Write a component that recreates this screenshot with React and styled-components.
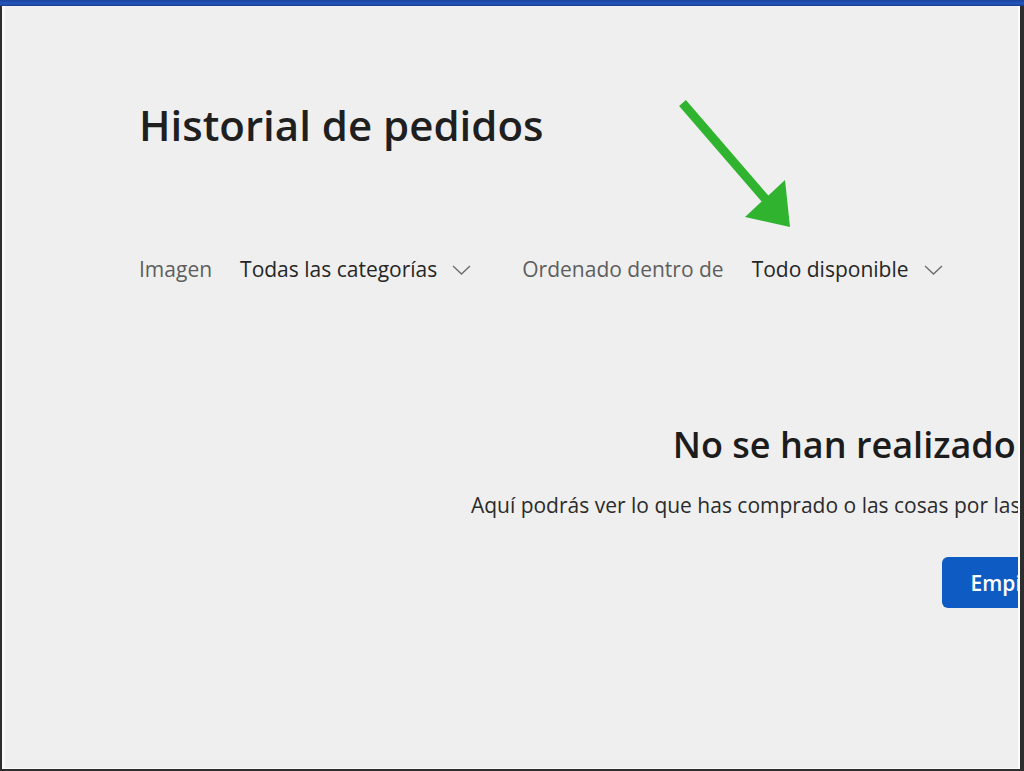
import React from "react";
import styled, { createGlobalStyle } from "styled-components";

const GlobalStyle = createGlobalStyle`
  html, body {
    margin: 0;
    padding: 0;
    background: #2d2d2d;
  }
  body {
    font-family: "Open Sans", "Noto Sans", "Liberation Sans", sans-serif;
  }
`;

const Screen = styled.div`
  position: relative;
  width: 1024px;
  height: 771px;
  display: flex;
  flex-direction: column;
  overflow: hidden;
  background: #2d2d2d;
`;

const TopBar = styled.div`
  height: 6px;
  flex-shrink: 0;
  background: linear-gradient(#1a42a0, #2556b9 60%, #173e94);
`;

const Frame = styled.div`
  flex: 1;
  min-height: 0;
  display: flex;
  border-left: 2px solid #2d2d2d;
  border-right: 4px solid #2d2d2d;
  border-bottom: 2px solid #2d2d2d;
`;

const Window = styled.div`
  flex: 1;
  min-width: 0;
  overflow: hidden;
  background: #efefef;
  border-left: 3px solid #f9f9f9;
  border-right: 2px solid #fbfbfb;
  border-bottom: 1px solid #fbfbfb;
`;

// the app window is wider than the screenshot, so its right side is cut off
const Page = styled.div`
  width: 2126px;
  padding-top: 94px;
`;

const Header = styled.header`
  padding-left: 134px;
`;

const Title = styled.h1`
  margin: 0;
  font-size: 42px;
  line-height: 50px;
  font-weight: 600;
  color: #1f1f1f;
`;

const Filters = styled.div`
  display: flex;
  align-items: center;
  margin-top: 105px;
  gap: 51px;
`;

const Filter = styled.div`
  display: flex;
  align-items: center;
  gap: 28px;
  font-size: 21px;
  line-height: 28px;
`;

const Label = styled.span`
  color: #5e5e5e;
`;

const Dropdown = styled.button`
  display: flex;
  align-items: center;
  gap: 15px;
  padding: 0;
  border: none;
  background: none;
  font: inherit;
  color: #262626;
  cursor: pointer;
`;

const Chevron = styled.svg`
  width: 19px;
  height: 10px;
  margin-top: 2px;
`;

const EmptyState = styled.section`
  display: flex;
  flex-direction: column;
  align-items: center;
  margin-top: 139px;
  white-space: nowrap;
`;

const EmptyTitle = styled.h2`
  margin: 0;
  font-size: 36px;
  line-height: 45px;
  font-weight: 600;
  color: #1c1c1c;
`;

const EmptyText = styled.p`
  margin: 24px 0 0;
  font-size: 21px;
  line-height: 28px;
  color: #2b2b2b;
`;

const PrimaryButton = styled.button`
  margin-top: 38px;
  height: 51px;
  padding: 0 29px;
  border: none;
  border-radius: 6px;
  background: #0e5bc4;
  color: #fff;
  font: inherit;
  font-size: 21px;
  font-weight: 600;
  cursor: pointer;
`;

const Annotation = styled.svg`
  position: absolute;
  left: 670px;
  top: 92px;
  width: 130px;
  height: 145px;
`;

const ChevronDown = () => (
  <Chevron viewBox="0 0 19 10">
    <polyline points="1,1 9.5,9 18,1" fill="none" stroke="#6b6b6b" strokeWidth="1.3" />
  </Chevron>
);

const filters = [
  { label: "Imagen", value: "Todas las categorías" },
  { label: "Ordenado dentro de", value: "Todo disponible" },
];

export default function App() {
  return (
    <>
      <GlobalStyle />
      <Screen>
        <TopBar />
        <Frame>
          <Window>
            <Page>
              <Header>
                <Title>Historial de pedidos</Title>
                <Filters>
                  {filters.map((f) => (
                    <Filter key={f.label}>
                      <Label>{f.label}</Label>
                      <Dropdown>
                        {f.value}
                        <ChevronDown />
                      </Dropdown>
                    </Filter>
                  ))}
                </Filters>
              </Header>
              <EmptyState>
                <EmptyTitle>No se han realizado pedidos para esta cuenta</EmptyTitle>
                <EmptyText>
                  Aquí podrás ver lo que has comprado o las cosas por las que te suscribiste en Microsoft Store, como aplicaciones y juegos.
                </EmptyText>
                <PrimaryButton>Empieza a comprar</PrimaryButton>
              </EmptyState>
            </Page>
          </Window>
        </Frame>
        <Annotation viewBox="0 0 130 145">
          <polygon
            points="9.1,13.9 91.6,109.4 75,125 120,135 115,88 98.4,103.6 15.9,8.1"
            fill="#30b42f"
          />
        </Annotation>
      </Screen>
    </>
  );
}
